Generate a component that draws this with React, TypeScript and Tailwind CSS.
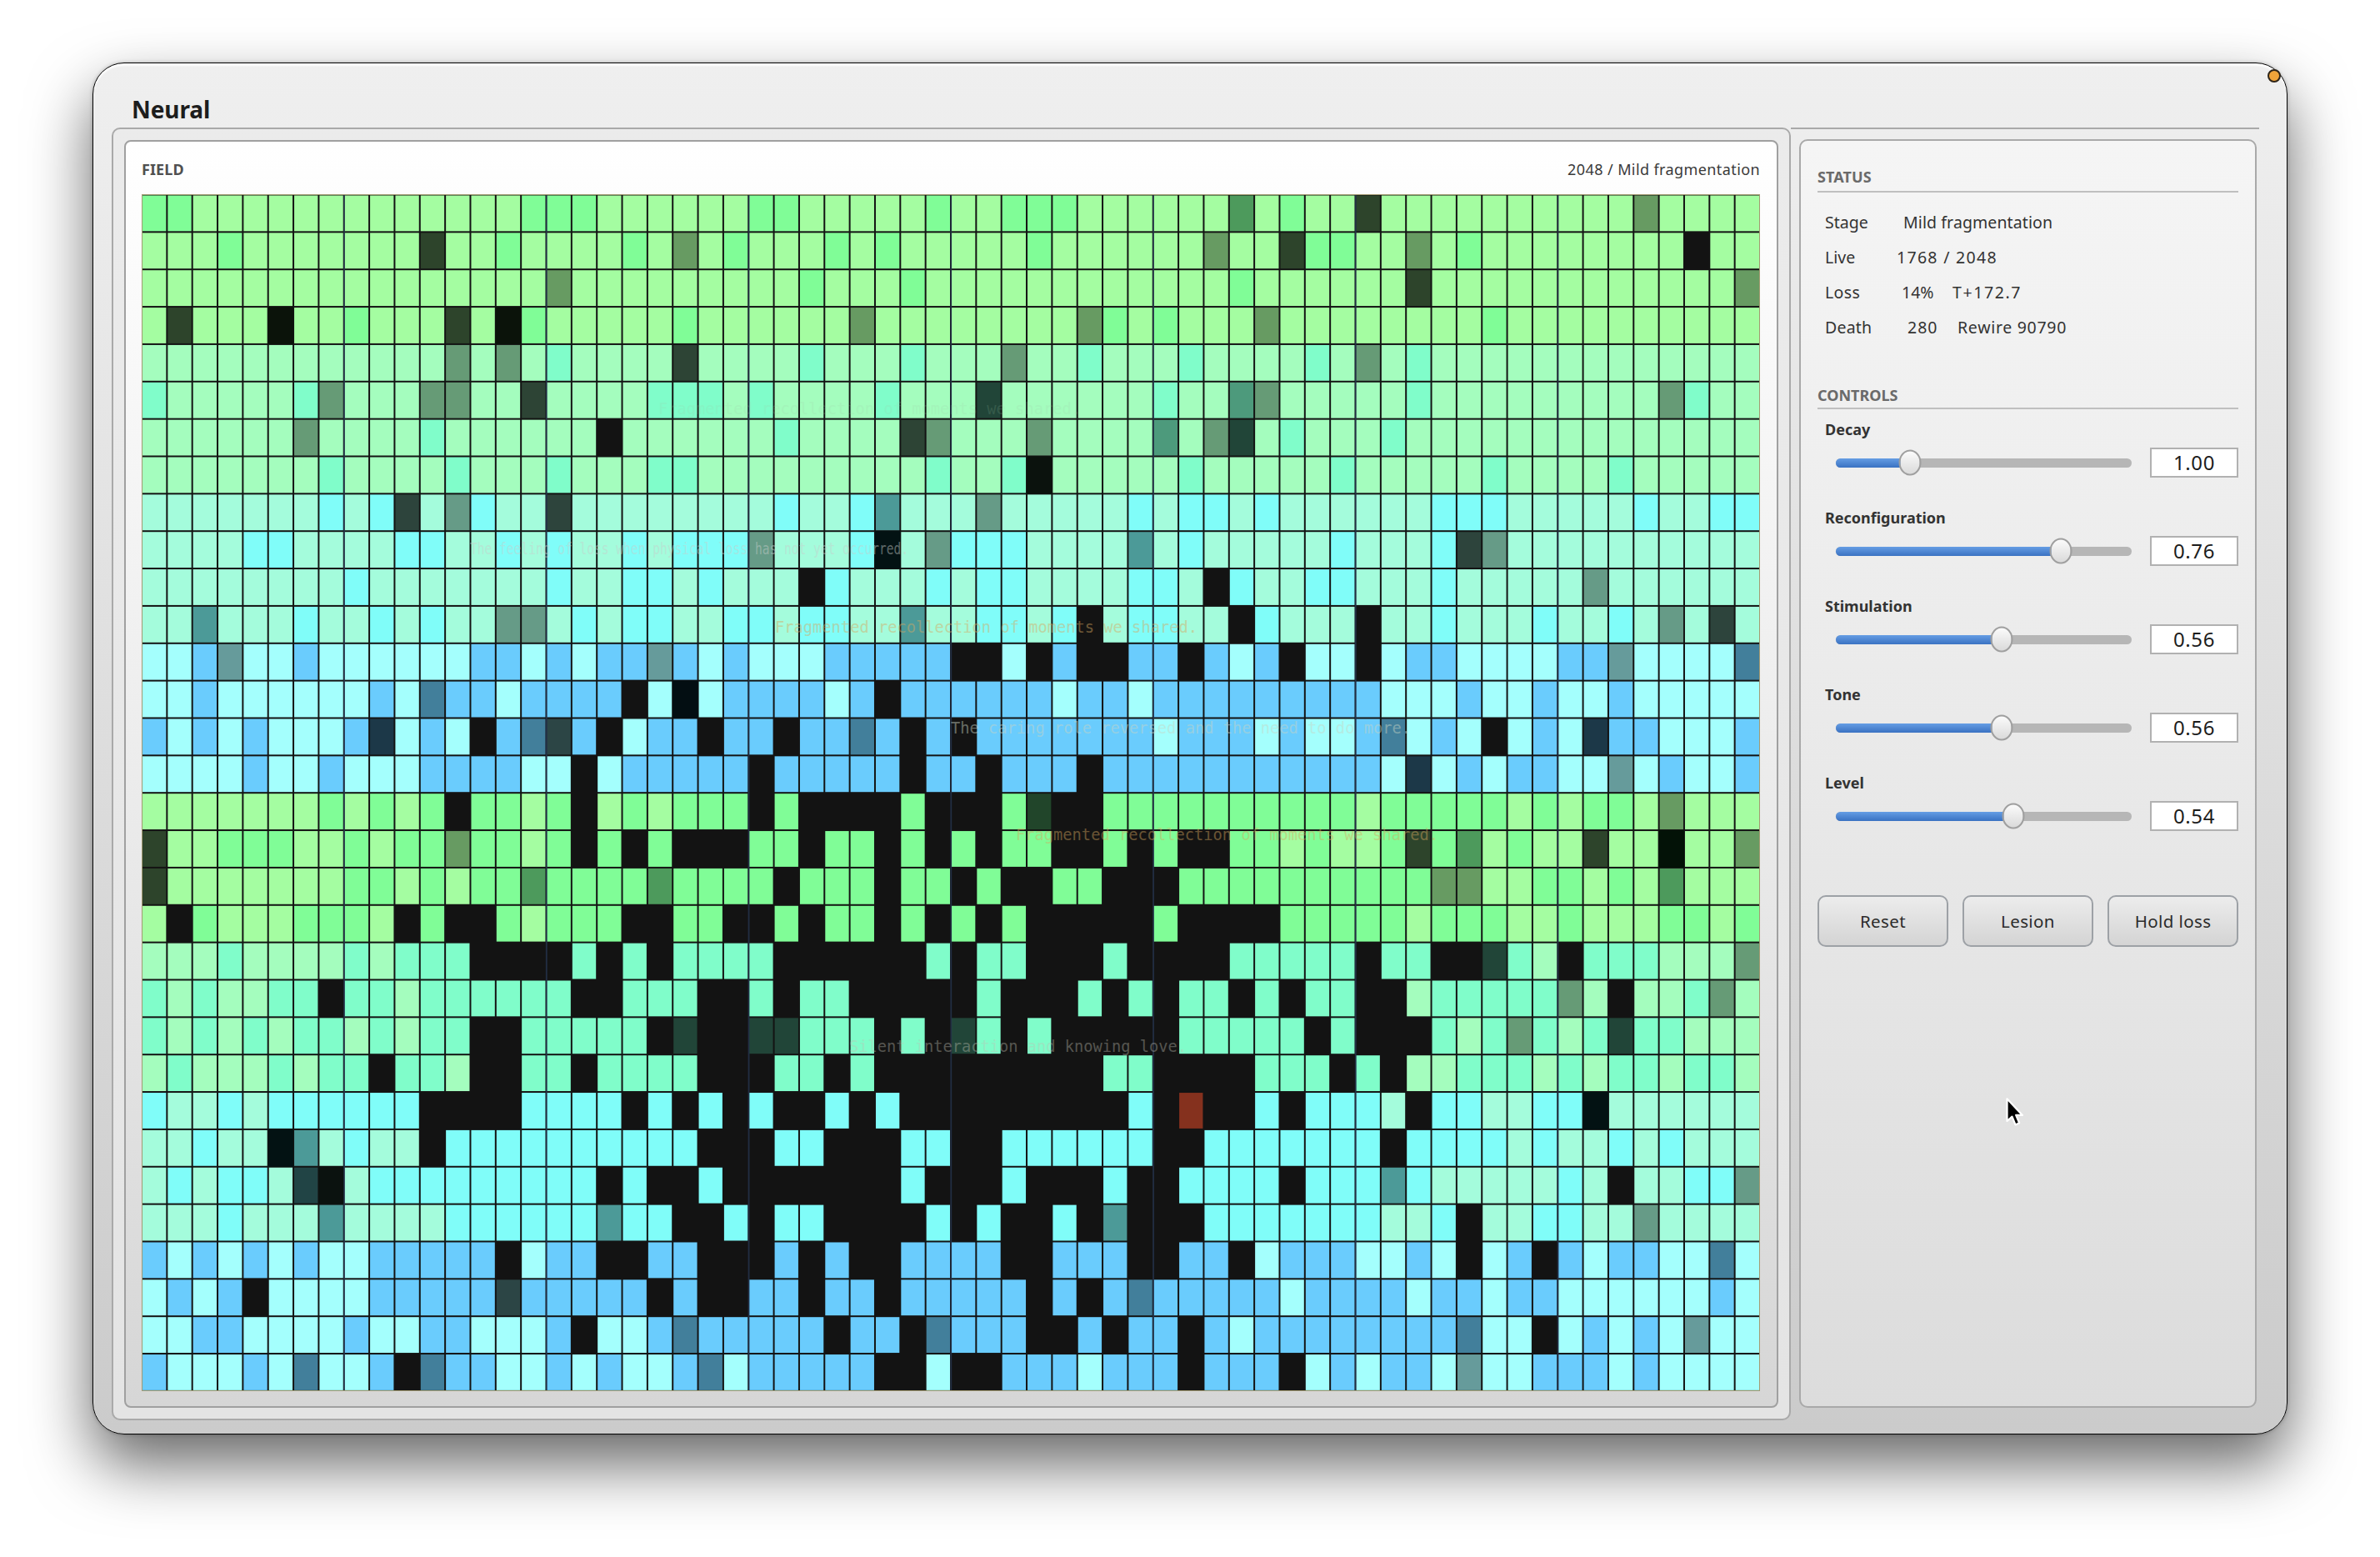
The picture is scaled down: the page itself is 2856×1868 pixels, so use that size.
import React from 'react';

/*
 * Cell codes:
 *   . pale live     s saturated live
 *   m pale fading   n saturated fading
 *   d pale dim      e saturated dim
 *   k pale failing  j saturated failing
 *   X dead          R lesion
 */
const FIELD_ROWS = [
  'ss.............sss......ss.....s..sss......n.s..d..........m....',
  '...s.......d..s....s.m.s...s.s.....s......m..dss..m.s........X..',
  '................m.........s...s............s......d............m',
  '.d...k..s...d.ks.....s......m........ms.s...m........s..........',
  '............m.m.s....d....s...s...m..s...s....s.m.s.............',
  's.....sm...mm..d....sss.s....s...e......s..nm.....s.........ms..',
  '......m....s......X......s....dm...m....n.me.s...s..............',
  '.......s....s...s...ss.........s..sk.....s.....s.....s....s.....',
  '.......s.sd.ms..d........s..sn...m.....s.ss.s......sss.....s..ss',
  '....ss....ss..s.s..s.sssm...sj.msss....n.s.....s...sdm..........',
  '........s.......s..ss.s...Xs...s.ss....ss.Xs..ss...s.....m......',
  '..n...s..s.s..mm.s.ss..ss.ss..n..ss.sX.ss..Xs...X..s...s..s.m.d.',
  '..sm..s......ss.s.ssms.s...sssssXX.XsXXssXs.sX..X.ss....ssm....n',
  '..s......s.nss.ssssX.j.ssss.sXssssss.ss.sssssssss...s..s..s.....',
  's.s.s...se.s.XsndsX.ssXssXssnsXsXsssssss.sss.s..sn.s.X.s.ess...s',
  '....s..s...ssss..X.sssssXsssssXssXsssXsssssssssss.e.s.ss..m.s..s',
  '.......s.s.sXss.sX.s.sssXsXXXXsXXXseXXssssssssss.sssss.s.ss.m...',
  'd..sss..s.ssmss.sXsXsXXXssXssXsXsXssXXsXsXXss.s..sdsn.s..d..j..m',
  'd.......ss.s.ssnssssnssssXsssXssXsXXssXXXssssssssssmm..ss.s.n...',
  '.Xs...sss.XsXXs.sssXXssXXsXssXsXsXsXXXXXsXXXXsssss.sss..s...ss.s',
  '...s....s.sssXXXXsXsXssssXXXXXXsXssXXXsXXXXsssssXssXXes.Xsss...m',
  's.s..ssXss.ssssssXXsssXXsXssXXXXXsXXXsXsXssXsXssXX.sssssm.X..sm.',
  's.s.s.ss.s.ssXXsssssXeXXeesssXsXesXsXXXXXsssssXsXXXs.sms.sess...',
  '.s...s.ssXss.XXssXssssXXXssXsXXXXXXXXXssXXXXsssXsX..sss.s.ss.ss.',
  's..s.ssssssXXXXssssXsXsXsXXsXsXXXXXXXXXsXRXXsXsss.Xss..ssj......',
  '..s..jn.s..XssssssssssXXXssXXXssXXssssssXXsssssssXssss.s..s.s...',
  '.s.ss.ek.sssssssssXsXXsXXXXXXXsXXXsXXXsXXssssXsssns.....s.X..ssm',
  '...s...n....ssssssnssXXsXssXXXXsXsXXsXnXXXsssssss..sX..ss..m....',
  's.s.s.s..sssssX.ssXXssXXXsXsXXssssXXsssXXssX.sss..s.X.sXs.ss..n.',
  '.s.sX....sssssdsssssXsXXssXssXsssssXsXsnsssss.ssss.ss.ss......s.',
  '..ss....s..ss...sX..snsssssXssXnsssXXsXssXs.ssssssssn..X.s.s.m..',
  's...s.n..sXnss..s.s..sn.sssssXX.XXsss.sssXsssX.s.ss.m..sss.s....',
];

const BANDS: Record<string, string>[] = [
  { '.': '#a4fda1', s: '#80fd97', m: '#679b62', n: '#4d9a5c', d: '#2d442b', e: '#21452a', k: '#0b130a', j: '#031207' },
  { '.': '#a4fdbe', s: '#80fdca', m: '#669b76', n: '#4d9a7c', d: '#2d4435', e: '#214538', k: '#0b120d', j: '#03120c' },
  { '.': '#a4fcdc', s: '#80fdf9', m: '#669b87', n: '#4c9a98', d: '#2d443c', e: '#214445', k: '#0b120f', j: '#031213' },
  { '.': '#a4fffd', s: '#6accfd', m: '#669b9b', n: '#427f9b', d: '#2c4545', e: '#1c3848', k: '#0b1212', j: '#030e12' },
];

const GRID_W = 1942;
const GRID_H = 1436;
const CW = GRID_W / 64;
const CH = 1435.4 / 32;
const GUIDES = [8, 16, 24, 32, 40, 48, 56];

const THOUGHTS = [
  { text: 'Fragmented recollection of moments we shared.', x: 620, y: 264, w: 507, fill: '#a0c8a8', o: 0.16 },
  { text: 'The feeling of loss when physical loss has not yet occurred.', x: 394, y: 432, w: 526, fill: '#c8cecb', o: 0.46 },
  { text: 'Fragmented recollection of moments we shared.', x: 760, y: 526, w: 507, fill: '#d8a860', o: 0.46 },
  { text: 'The caring role reversed and the need to do more.', x: 971, y: 647, w: 552, fill: '#c8d4c4', o: 0.46 },
  { text: 'Fragmented recollection of moments we shared.', x: 1049, y: 775, w: 507, fill: '#d8a860', o: 0.44 },
  { text: 'Silent interaction and knowing love.', x: 849, y: 1029, w: 405, fill: '#c0c0b4', o: 0.38 },
];

function NeuralField() {
  return (
    <svg className="block" width={GRID_W} height={GRID_H} viewBox={`0 0 ${GRID_W} ${GRID_H}`}>
      <rect width={GRID_W} height={GRID_H} fill="#131313" />
      {FIELD_ROWS.map((row, r) =>
        row.split('').map((code, c) => {
          if (code === 'X') return null;
          const full = code === 'k' || code === 'j';
          const fill = code === 'R' ? '#85311e' : BANDS[Math.floor(r / 4) % 4][code];
          const inset = full ? 0 : 1;
          return (
            <rect
              key={`${r}-${c}`}
              x={c * CW + inset}
              y={0.5 + r * CH + inset}
              width={CW - inset * 2}
              height={CH - inset * 2}
              fill={fill}
            />
          );
        }),
      )}
      {GUIDES.map((g) => (
        <rect key={g} x={g * CW - 0.6} y={0} width={1.8} height={GRID_H} fill="#35507f" opacity={0.45} />
      ))}
      {THOUGHTS.map((t, i) => (
        <text
          key={i}
          x={t.x}
          y={t.y}
          textLength={t.w}
          lengthAdjust="spacingAndGlyphs"
          fill={t.fill}
          opacity={t.o}
          fontSize={20}
          fontFamily='"DejaVu Sans Mono", monospace'
        >
          {t.text}
        </text>
      ))}
      <rect x={0.5} y={0.5} width={GRID_W - 1} height={GRID_H - 1} fill="none" stroke="#a39a72" strokeWidth={1} />
    </svg>
  );
}

function Slider({ label, value, percent }: { label: string; value: string; percent: number }) {
  return (
    <div className="h-[106px]">
      <div className="ml-[9px] h-[37px] text-[18px] leading-[31px] font-bold text-[#333333]">{label}</div>
      <div className="flex h-9 items-center pl-[22px]">
        <div className="relative h-[11px] w-[355px] rounded-full bg-[#b6b6b6]">
          <div
            className="h-full rounded-l-full bg-linear-to-b from-[#659de4] to-[#3a72c2]"
            style={{ width: `${percent}%` }}
          />
          <div
            className="absolute top-1/2 h-[31px] w-[27px] -translate-x-1/2 -translate-y-1/2 rounded-[50%] border-2 border-[#9f9f9f] bg-linear-to-b from-[#fbfbfb] to-[#dadada]"
            style={{ left: `${percent}%` }}
          />
        </div>
        <div className="ml-auto flex h-9 w-[106px] items-center justify-center border-2 border-[#b1b1b1] bg-white text-[24px] tracking-[0.6px] text-[#1c1c1c]">
          {value}
        </div>
      </div>
    </div>
  );
}

function PanelButton({ children }: { children: React.ReactNode }) {
  return (
    <button className="flex h-[62px] flex-1 items-center justify-center rounded-[10px] border-2 border-[#9da1a6] bg-linear-to-b from-[#ececec] to-[#d4d4d4] text-[20.5px] tracking-[0.4px] text-[#2b2b2b]">
      {children}
    </button>
  );
}

export default function App() {
  return (
    <div className="h-[1868px] w-[2856px] overflow-hidden bg-white pt-[75px] pl-[111px] font-['Noto_Sans',sans-serif]">
      <div className="relative h-[1646px] w-[2634px] rounded-[38px] border border-black bg-linear-to-b from-[#efefef] to-[#cbcbcb] shadow-[inset_0_3px_2px_rgba(255,255,255,0.9),0_0_4px_rgba(0,0,0,0.25),0_36px_76px_rgba(0,0,0,0.6)]">
        <header className="flex h-[77px] items-end pb-[3px] pl-[46px]">
          <h1 className="text-[28px] leading-[38px] font-bold tracking-[-0.1px] text-[#1d1d1d]">Neural</h1>
        </header>

        <div className="flex">
          <section className="ml-[22px] h-[1551px] w-[2015px] rounded-[10px] border-2 border-[#a9a9a9] bg-linear-to-b from-[#ebebeb] to-[#e4e4e4] p-[13px]">
            <div className="h-[1521px] w-[1985px] rounded-[8px] border-2 border-[#a0a0a0] bg-linear-to-b from-white via-[#ececec] to-[#d6d6d6] pr-[20px] pl-[19px]">
              <div className="flex h-[63px] w-[1942px] items-center justify-between pt-[3px] text-[18px]">
                <span className="font-bold tracking-[0.1px] text-[#505050]">FIELD</span>
                <span className="tracking-[0.4px] text-[#3a3a3a]">2048 / Mild fragmentation</span>
              </div>
              <NeuralField />
            </div>
          </section>

          <div className="w-[562px] border-t-2 border-[#a9a9a9]">
            <aside className="mt-[12px] ml-[10px] h-[1522px] w-[549px] rounded-[10px] border-2 border-[#a9a9a9] bg-linear-to-b from-[#f5f5f5] via-[#e9e9e9] to-[#dcdcdc] px-5 pt-[35px]">
              <h2 className="h-[27px] border-b-2 border-[#bfbfbf] text-[18px] leading-[16px] font-bold tracking-[0.1px] text-[#6a6a6a]">
                STATUS
              </h2>
              <div className="mt-[15px] ml-[9px] text-[19.5px] leading-[42px] text-[#333333]">
                <div className="flex">
                  <span className="w-[94px]">Stage</span>
                  <span className="tracking-[0.1px]">Mild fragmentation</span>
                </div>
                <div className="flex">
                  <span className="w-[86px]">Live</span>
                  <span className="tracking-[1.3px]">1768 / 2048</span>
                </div>
                <div className="flex">
                  <span className="w-[92px] tracking-[0.4px]">Loss</span>
                  <span className="w-[61px]">14%</span>
                  <span className="tracking-[1.6px]">T+172.7</span>
                </div>
                <div className="flex">
                  <span className="w-[99px] tracking-[0.2px]">Death</span>
                  <span className="w-[60px] tracking-[1px]">280</span>
                  <span className="tracking-[0.7px]">Rewire 90790</span>
                </div>
              </div>

              <h2 className="mt-[50px] h-[27px] border-b-2 border-[#bfbfbf] text-[18px] leading-[21px] font-bold text-[#6a6a6a]">
                CONTROLS
              </h2>
              <div className="mt-[9px]">
                <Slider label="Decay" value="1.00" percent={25} />
                <Slider label="Reconfiguration" value="0.76" percent={76} />
                <Slider label="Stimulation" value="0.56" percent={56} />
                <Slider label="Tone" value="0.56" percent={56} />
                <Slider label="Level" value="0.54" percent={60} />
              </div>
              <div className="mt-[44px] flex gap-[17px]">
                <PanelButton>Reset</PanelButton>
                <PanelButton>Lesion</PanelButton>
                <PanelButton>Hold loss</PanelButton>
              </div>
            </aside>
          </div>
        </div>

        <div className="absolute top-[7px] right-[7px] h-4 w-4 rounded-full border-2 border-[#2e2418] bg-[#f0a43a]" />
        <svg className="absolute top-[1239px] left-[2293px]" width="27" height="40" viewBox="0 0 24 36">
          <path
            d="M3 3 V27 L8.4 22.2 L12 31 L16.2 29 L12.6 20.6 H19.6 Z"
            fill="#000"
            stroke="#fff"
            strokeWidth="2"
            strokeLinejoin="round"
          />
        </svg>
      </div>
    </div>
  );
}
